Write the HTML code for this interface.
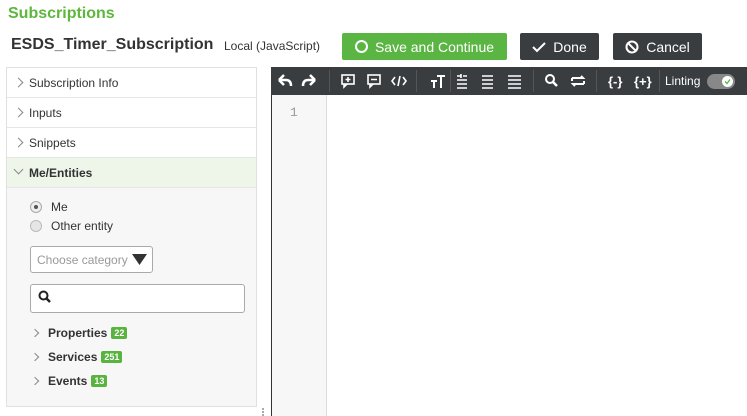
<!DOCTYPE html>
<html><head><meta charset="utf-8"><style>
*{box-sizing:border-box;margin:0;padding:0}
body{width:747px;height:416px;overflow:hidden;background:#fff;font-family:"Liberation Sans",Arial,sans-serif;color:#333;position:relative}
.a{position:absolute}
.btn{position:absolute;top:33px;height:27px;border-radius:2px;color:#fff;font-size:14px;display:flex;align-items:center;justify-content:center;gap:7px}
.row{position:absolute;left:7px;width:249px;height:30px;border-bottom:1px solid #e6e6e6;font-size:12px;display:flex;align-items:center;padding-left:22px}
.chev{position:absolute;left:8px;top:11px;width:7px;height:7px;border-right:1px solid #888;border-bottom:1px solid #888;transform:rotate(-45deg)}
.tb{position:absolute;top:67px;height:28px;color:#fff;font-size:13px;font-weight:bold;display:flex;align-items:center}
.sep{position:absolute;top:70px;width:1px;height:22px;background:#555}
.badge{background:#58b33f;color:#fff;font-size:9px;font-weight:bold;padding:1px 3px;border-radius:2px;margin-left:4px}
.item{position:absolute;left:32px;font-size:12px;font-weight:bold;display:flex;align-items:center;color:#333}
.item .c{width:6px;height:6px;border-right:1px solid #888;border-bottom:1px solid #888;transform:rotate(-45deg);margin-right:10px}
</style></head><body>
<div class="a" style="left:8px;top:5px;font-size:16px;font-weight:bold;color:#5cb73b">Subscriptions</div>
<div class="a" style="left:11px;top:36px;font-size:16px;font-weight:bold;color:#333">ESDS_Timer_Subscription</div>
<div class="a" style="left:224px;top:39px;font-size:12px;color:#333">Local (JavaScript)</div>
<div class="btn" style="left:342px;width:165px;background:#5bb543"><span style="width:13px;height:13px;border:2px solid #fff;border-radius:50%"></span>Save and Continue</div>
<div class="btn" style="left:520px;width:79px;background:#3a3d40"><svg width="14" height="12"><path d="M1 6 L5 10 L13 2" stroke="#fff" stroke-width="2" fill="none"/></svg>Done</div>
<div class="btn" style="left:613px;width:89px;background:#3a3d40"><svg width="14" height="14"><circle cx="7" cy="7" r="5.5" stroke="#fff" stroke-width="2" fill="none"/><path d="M3 3 L11 11" stroke="#fff" stroke-width="2"/></svg>Cancel</div>

<div class="a" style="left:6px;top:67px;width:251px;height:340px;border:1px solid #e0e0e0;background:#f7f7f7"></div>
<div class="row" style="top:68px;background:#fff"><span class="chev"></span>Subscription Info</div>
<div class="row" style="top:98px;background:#fff"><span class="chev"></span>Inputs</div>
<div class="row" style="top:128px;background:#fff"><span class="chev"></span>Snippets</div>
<div class="row" style="top:158px;background:#eef6ea;font-weight:bold"><span class="chev" style="transform:rotate(45deg);top:8px"></span>Me/Entities</div>

<div class="a" style="left:30px;top:201px;width:12px;height:12px;border-radius:50%;border:1px solid #aaa;background:#eee"><div style="width:4px;height:4px;background:#555;border-radius:50%;margin:3px"></div></div>
<div class="a" style="left:51px;top:200px;font-size:12px">Me</div>
<div class="a" style="left:30px;top:220px;width:12px;height:12px;border-radius:50%;border:1px solid #bbb;background:#e6e6e6"></div>
<div class="a" style="left:51px;top:219px;font-size:12px">Other entity</div>
<div class="a" style="left:30px;top:246px;width:123px;height:27px;border:1px solid #aaa;border-radius:3px;background:#fff;font-size:12px;color:#999;padding:6px 0 0 6px">Choose category</div>
<svg class="a" style="left:132px;top:254px" width="15" height="12"><path d="M0 0 H15 L7.5 11Z" fill="#333"/></svg>
<div class="a" style="left:30px;top:284px;width:215px;height:29px;border:1px solid #aaa;border-radius:3px;background:#fff"></div>
<svg class="a" style="left:38px;top:290px" width="14" height="14"><circle cx="5.5" cy="5.5" r="4" stroke="#222" stroke-width="2" fill="none"/><path d="M8.5 8.5 L12 12" stroke="#222" stroke-width="2.5"/></svg>
<div class="item" style="top:326px"><span class="c"></span>Properties<span class="badge">22</span></div>
<div class="item" style="top:350px"><span class="c"></span>Services<span class="badge">251</span></div>
<div class="item" style="top:374px"><span class="c"></span>Events<span class="badge">13</span></div>

<div class="a" style="left:262px;top:408px;width:2px;height:2px;background:#aaa;box-shadow:0 3px 0 #aaa,0 6px 0 #aaa"></div>

<div class="a" style="left:271px;top:67px;width:476px;height:349px;border-left:1px solid #333;background:#fff"></div>
<div class="a" style="left:271px;top:67px;width:476px;height:28px;background:#3a3d40"></div>
<div class="a" style="left:272px;top:95px;width:55px;height:321px;background:#f7f7f7;border-right:1px solid #ddd"></div>
<div class="a" style="left:290px;top:105px;font-size:13px;color:#999;font-family:'Liberation Mono',monospace">1</div>

<svg class="a" style="left:271px;top:67px" width="476" height="28" fill="none" stroke="#fff" stroke-width="2">
<path d="M8 13 L13 8 M8 13 L13 18 M8 13 H15 Q20 13 20 19" stroke-width="2.5"/>
<path d="M44 13 L39 8 M44 13 L39 18 M44 13 H37 Q32 13 32 19" stroke-width="2.5"/>
<rect x="71" y="8" width="12" height="9" stroke-width="1.6"/><path d="M77 10 V15 M74.5 12.5 H79.5 M73 17 V20 L76 17" stroke-width="1.6"/>
<rect x="97" y="8" width="12" height="9" stroke-width="1.6"/><path d="M100 12.5 H106 M99 17 V20 L102 17" stroke-width="1.6"/>
<path d="M124 10 L121 14 L124 18 M132 10 L135 14 L132 18 M129 9 L127 19" stroke-width="1.6"/>
<path d="M160 14 H166 M163 14 V21 M166 9 H174 M170 9 V21" stroke-width="2"/>
<path d="M186 9 H190 M186 13 H196 M186 17 H196 M186 21 H196 M192 9 H196 M190 11 V7" stroke-width="1.6"/>
<path d="M211 9 H222 M211 13 H222 M211 17 H222 M211 21 H222" stroke-width="1.6"/>
<path d="M237 9 H250 M237 13 H250 M237 17 H250 M237 21 H250" stroke-width="1.6"/>
<circle cx="279" cy="12" r="4" stroke-width="2"/><path d="M282 15 L286 19" stroke-width="2.5"/>
<path d="M301 11 H312 L310 9 M313 17 H302 L304 19 M301 11 V14 M313 17 V14" stroke-width="2"/>
</svg>
<div class="sep" style="left:450px"></div><div class="sep" style="left:416px"></div><div class="sep" style="left:329px"></div><div class="sep" style="left:596px"></div><div class="sep" style="left:533px"></div><div class="sep" style="left:659px"></div>
<div class="tb" style="left:608px">{-}</div>
<div class="tb" style="left:634px">{+}</div>
<div class="tb" style="left:665px;font-weight:normal;font-size:12px">Linting</div>
<div class="a" style="left:707px;top:74px;width:28px;height:15px;border-radius:8px;background:#888"><div style="position:absolute;right:2px;top:2px;width:11px;height:11px;border-radius:50%;background:#fff"><svg width="11" height="11" style="position:absolute;left:0;top:0"><path d="M3 5.5 L5 7.5 L8 3.5" stroke="#5bb543" stroke-width="1.3" fill="none"/></svg></div></div>
</body></html>
